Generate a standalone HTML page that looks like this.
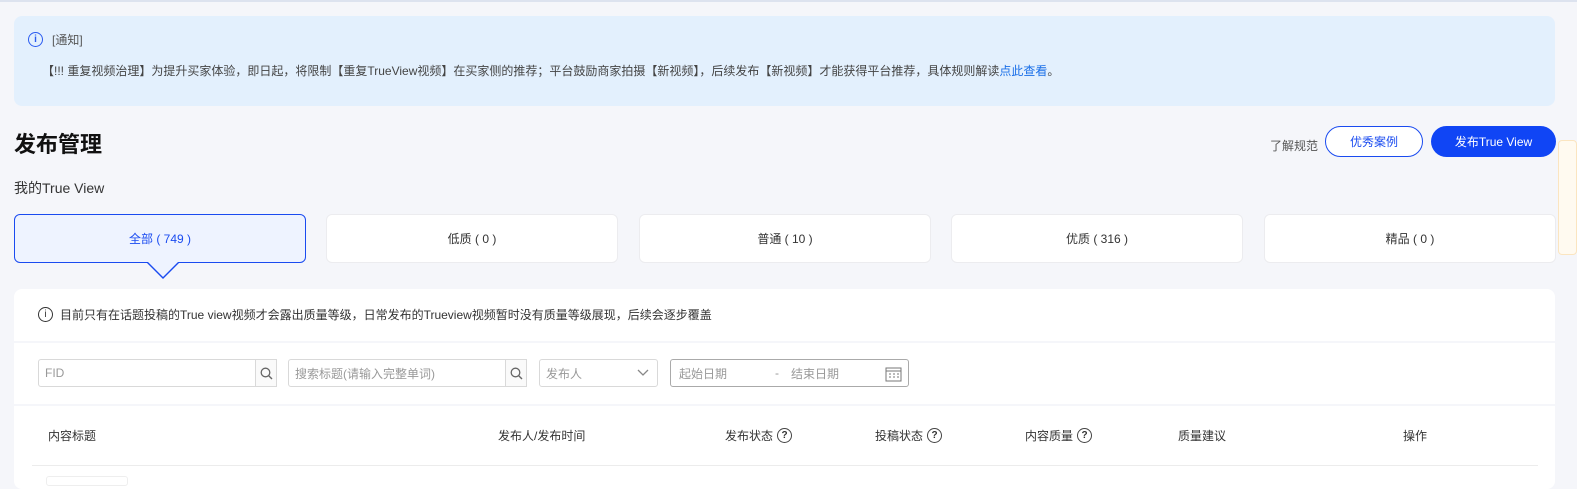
<!DOCTYPE html>
<html><head><meta charset="utf-8"><style>
*{margin:0;padding:0;box-sizing:border-box}
body{width:1577px;height:484px;overflow:hidden;background:#f5f6fa;font-family:"Liberation Sans","Noto Sans CJK SC",sans-serif;color:#333;position:relative}
.abs{position:absolute}
.topline{left:0;top:0;width:1577px;height:2px;background:#dde3ef}
.notice{left:14px;top:16px;width:1541px;height:90px;background:#e3f0fd;border-radius:8px}
.btn{border-radius:16px;height:31px;font-size:12px;display:flex;align-items:center;justify-content:center}
.tab{top:214px;width:292px;height:49px;background:#fff;border:1px solid #ececef;border-radius:6px;font-size:12px;display:flex;align-items:center;justify-content:center;color:#333}
.tab.on{background:#eef3ff;border-color:#1a4bf0;color:#1a4bf0}
.panel{left:14px;top:289px;width:1541px;height:200px;background:#fff;border-radius:8px}
.inp{height:28px;border:1px solid #d9d9d9;border-radius:3px;font-size:12px;color:#999;display:flex;align-items:center;padding-left:6px;top:359px;background:#fff}
.th{top:427px;font-size:12px;color:#333;display:flex;align-items:center;gap:4px}
.q{width:15px;height:15px;border:1.5px solid #444;border-radius:50%;font-size:10px;font-weight:bold;display:inline-flex;align-items:center;justify-content:center;color:#333}
</style></head><body>
<div class="abs topline"></div>
<div class="abs notice"></div>
<div class="abs" style="left:28px;top:32px;width:15px;height:15px;border:1.5px solid #2a5bf0;border-radius:50%;color:#2a5bf0;font-size:10px;display:flex;align-items:center;justify-content:center;font-weight:bold">i</div>
<div class="abs" style="left:52px;top:31px;font-size:12px;color:#555">[通知]</div>
<div class="abs" style="left:42px;top:62px;font-size:12px;color:#444;white-space:nowrap">【!!! 重复视频治理】为提升买家体验，即日起，将限制【重复TrueView视频】在买家侧的推荐；平台鼓励商家拍摄【新视频】，后续发布【新视频】才能获得平台推荐，具体规则解读<span style="color:#1a6fe8">点此查看</span>。</div>
<div class="abs" style="left:14px;top:127px;font-size:22px;font-weight:bold;color:#111">发布管理</div>
<div class="abs" style="left:14px;top:178px;font-size:14px;color:#333">我的True View</div>
<div class="abs" style="left:1270px;top:137px;font-size:12px;color:#555">了解规范</div>
<div class="abs btn" style="left:1325px;top:126px;width:98px;border:1px solid #1a4bf0;color:#1a4bf0;background:#fff">优秀案例</div>
<div class="abs btn" style="left:1431px;top:126px;width:125px;background:#1045f5;color:#fff">发布True View</div>
<div class="abs" style="left:1558px;top:140px;width:19px;height:115px;border:1px solid #fbe5c0;background:#fffaf0;border-radius:4px"></div>
<div class="abs tab on" style="left:14px">全部 ( 749 )</div>
<div class="abs" style="left:146px;top:262px;width:0;height:0;border-left:17px solid transparent;border-right:17px solid transparent;border-top:17px solid #1a4bf0"></div>
<div class="abs" style="left:147px;top:261px;width:0;height:0;border-left:16px solid transparent;border-right:16px solid transparent;border-top:16px solid #eef3ff"></div>
<div class="abs tab" style="left:326px">低质 ( 0 )</div>
<div class="abs tab" style="left:639px">普通 ( 10 )</div>
<div class="abs tab" style="left:951px">优质 ( 316 )</div>
<div class="abs tab" style="left:1264px">精品 ( 0 )</div>
<div class="abs panel"></div>
<div class="abs" style="left:38px;top:307px;width:15px;height:15px;border:1.3px solid #333;border-radius:50%;font-size:10px;display:flex;align-items:center;justify-content:center">i</div>
<div class="abs" style="left:60px;top:306px;font-size:12px;color:#333">目前只有在话题投稿的True view视频才会露出质量等级，日常发布的Trueview视频暂时没有质量等级展现，后续会逐步覆盖</div>
<div class="abs" style="left:14px;top:341px;width:1541px;height:2px;background:#f5f6fa"></div>
<div class="abs" style="left:14px;top:404px;width:1541px;height:2px;background:#f5f6fa"></div>
<div class="abs inp" style="left:38px;width:239px">FID</div>
<div class="abs" style="left:255px;top:359px;width:22px;height:28px;border:1px solid #d9d9d9;background:#fafafa;display:flex;align-items:center;justify-content:center"><svg width="13" height="13" viewBox="0 0 13 13"><circle cx="5.5" cy="5.5" r="4.3" fill="none" stroke="#666" stroke-width="1.3"/><path d="M8.6 8.6L12 12" stroke="#666" stroke-width="1.4"/></svg></div>
<div class="abs inp" style="left:288px;width:239px">搜索标题(请输入完整单词)</div>
<div class="abs" style="left:505px;top:359px;width:22px;height:28px;border:1px solid #d9d9d9;background:#fafafa;display:flex;align-items:center;justify-content:center"><svg width="13" height="13" viewBox="0 0 13 13"><circle cx="5.5" cy="5.5" r="4.3" fill="none" stroke="#666" stroke-width="1.3"/><path d="M8.6 8.6L12 12" stroke="#666" stroke-width="1.4"/></svg></div>
<div class="abs inp" style="left:539px;width:119px">发布人<svg style="position:absolute;right:8px;top:9px" width="12" height="8" viewBox="0 0 12 8"><path d="M1 1l5 5 5-5" fill="none" stroke="#888" stroke-width="1.3"/></svg></div>
<div class="abs inp" style="left:670px;width:239px;border-color:#aaa;padding-left:8px">起始日期<span style="margin-left:48px">-</span><span style="margin-left:12px">结束日期</span>
<svg style="position:absolute;right:6px;top:6px" width="17" height="16" viewBox="0 0 17 16"><rect x="1" y="2" width="15" height="13" fill="none" stroke="#777"/><line x1="1" y1="5" x2="16" y2="5" stroke="#777"/><path d="M4 8h2M8 8h2M12 8h2M4 11h2M8 11h2M12 11h2" stroke="#777"/></svg></div>
<div class="abs th" style="left:48px">内容标题</div>
<div class="abs th" style="left:498px">发布人/发布时间</div>
<div class="abs th" style="left:725px">发布状态 <span class="q">?</span></div>
<div class="abs th" style="left:875px">投稿状态 <span class="q">?</span></div>
<div class="abs th" style="left:1025px">内容质量 <span class="q">?</span></div>
<div class="abs th" style="left:1178px">质量建议</div>
<div class="abs th" style="left:1403px">操作</div>
<div class="abs" style="left:32px;top:465px;width:1506px;height:1px;background:#ececec"></div>
<div class="abs" style="left:46px;top:476px;width:82px;height:10px;border:1px solid #eee;border-radius:3px"></div>
</body></html>
